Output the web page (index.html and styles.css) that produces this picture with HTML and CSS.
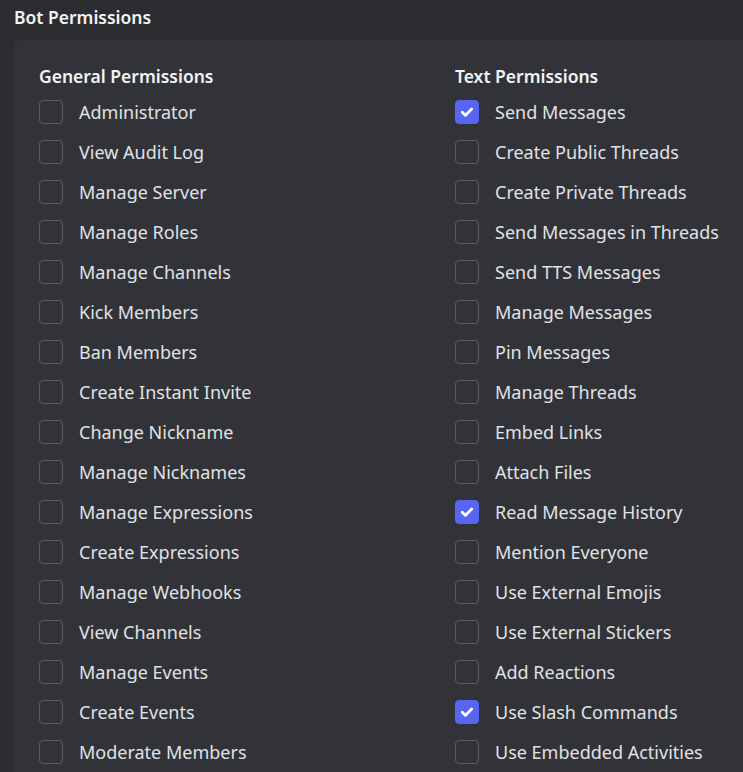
FILE: index.html
```html
<!DOCTYPE html>
<html>
<head>
<meta charset="utf-8">
<link rel="stylesheet" href="styles.css">
</head>
<body>
<div class="page">
  <h1 class="title">Bot Permissions</h1>
  <div class="panel">
    <div class="col">
      <h2 class="heading">General Permissions</h2>
      <ul class="list">
        <li class="item"><span class="box"></span>Administrator</li>
        <li class="item"><span class="box"></span>View Audit Log</li>
        <li class="item"><span class="box"></span>Manage Server</li>
        <li class="item"><span class="box"></span>Manage Roles</li>
        <li class="item"><span class="box"></span>Manage Channels</li>
        <li class="item"><span class="box"></span>Kick Members</li>
        <li class="item"><span class="box"></span>Ban Members</li>
        <li class="item"><span class="box"></span>Create Instant Invite</li>
        <li class="item"><span class="box"></span>Change Nickname</li>
        <li class="item"><span class="box"></span>Manage Nicknames</li>
        <li class="item"><span class="box"></span>Manage Expressions</li>
        <li class="item"><span class="box"></span>Create Expressions</li>
        <li class="item"><span class="box"></span>Manage Webhooks</li>
        <li class="item"><span class="box"></span>View Channels</li>
        <li class="item"><span class="box"></span>Manage Events</li>
        <li class="item"><span class="box"></span>Create Events</li>
        <li class="item"><span class="box"></span>Moderate Members</li>
      </ul>
    </div>
    <div class="col col-right">
      <h2 class="heading">Text Permissions</h2>
      <ul class="list">
        <li class="item"><span class="box checked"><svg viewBox="0 0 24 24" width="24" height="24"><path d="M7.3 12.3l3.2 3.1 6.2-6.4" fill="none" stroke="#fff" stroke-width="2.8" stroke-linecap="round" stroke-linejoin="round"/></svg></span>Send Messages</li>
        <li class="item"><span class="box"></span>Create Public Threads</li>
        <li class="item"><span class="box"></span>Create Private Threads</li>
        <li class="item"><span class="box"></span>Send Messages in Threads</li>
        <li class="item"><span class="box"></span>Send TTS Messages</li>
        <li class="item"><span class="box"></span>Manage Messages</li>
        <li class="item"><span class="box"></span>Pin Messages</li>
        <li class="item"><span class="box"></span>Manage Threads</li>
        <li class="item"><span class="box"></span>Embed Links</li>
        <li class="item"><span class="box"></span>Attach Files</li>
        <li class="item"><span class="box checked"><svg viewBox="0 0 24 24" width="24" height="24"><path d="M7.3 12.3l3.2 3.1 6.2-6.4" fill="none" stroke="#fff" stroke-width="2.8" stroke-linecap="round" stroke-linejoin="round"/></svg></span>Read Message History</li>
        <li class="item"><span class="box"></span>Mention Everyone</li>
        <li class="item"><span class="box"></span>Use External Emojis</li>
        <li class="item"><span class="box"></span>Use External Stickers</li>
        <li class="item"><span class="box"></span>Add Reactions</li>
        <li class="item"><span class="box checked"><svg viewBox="0 0 24 24" width="24" height="24"><path d="M7.3 12.3l3.2 3.1 6.2-6.4" fill="none" stroke="#fff" stroke-width="2.8" stroke-linecap="round" stroke-linejoin="round"/></svg></span>Use Slash Commands</li>
        <li class="item"><span class="box"></span>Use Embedded Activities</li>
      </ul>
    </div>
  </div>
</div>
</body>
</html>
```
FILE: styles.css
```css
html, body {
  margin: 0;
  padding: 0;
  background: #2b2d31;
  overflow: hidden;
  height: 100%;
}
body {
  font-family: "Noto Sans", "Open Sans", sans-serif;
  color: #dbdee1;
}
.page {
  box-sizing: border-box;
  height: 100%;
  padding: 5px 0 0 14px;
  display: flex;
  flex-direction: column;
}
.title {
  margin: 0;
  font-size: 17.5px;
  font-weight: 600;
  line-height: 24px;
  color: #f2f3f5;
  height: 35px;
  flex: none;
}
.panel {
  flex: 1;
  min-height: 0;
  background: #313338;
  border-radius: 4px 0 0 0;
  display: flex;
  padding: 24px 0 0 25px;
  overflow: hidden;
}
.col {
  width: 416px;
  flex: none;
}
.col-right {
  width: auto;
  flex: 1;
  min-width: 0;
}
.heading {
  margin: 0;
  font-size: 17.5px;
  font-weight: 600;
  line-height: 24px;
  color: #f2f3f5;
  height: 28px;
}
.list {
  list-style: none;
  margin: 0;
  padding: 0;
}
.item {
  display: flex;
  align-items: center;
  height: 40px;
  font-size: 18px;
  color: #e0e2e5;
  white-space: nowrap;
}
.box {
  box-sizing: border-box;
  width: 24px;
  height: 24px;
  border: 1px solid #5a5c64;
  border-radius: 4px;
  margin-right: 16px;
  flex: none;
  display: flex;
}
.box.checked {
  background: #5865f2;
  border-color: #5865f2;
}
.box svg {
  margin: -1px;
}
```
